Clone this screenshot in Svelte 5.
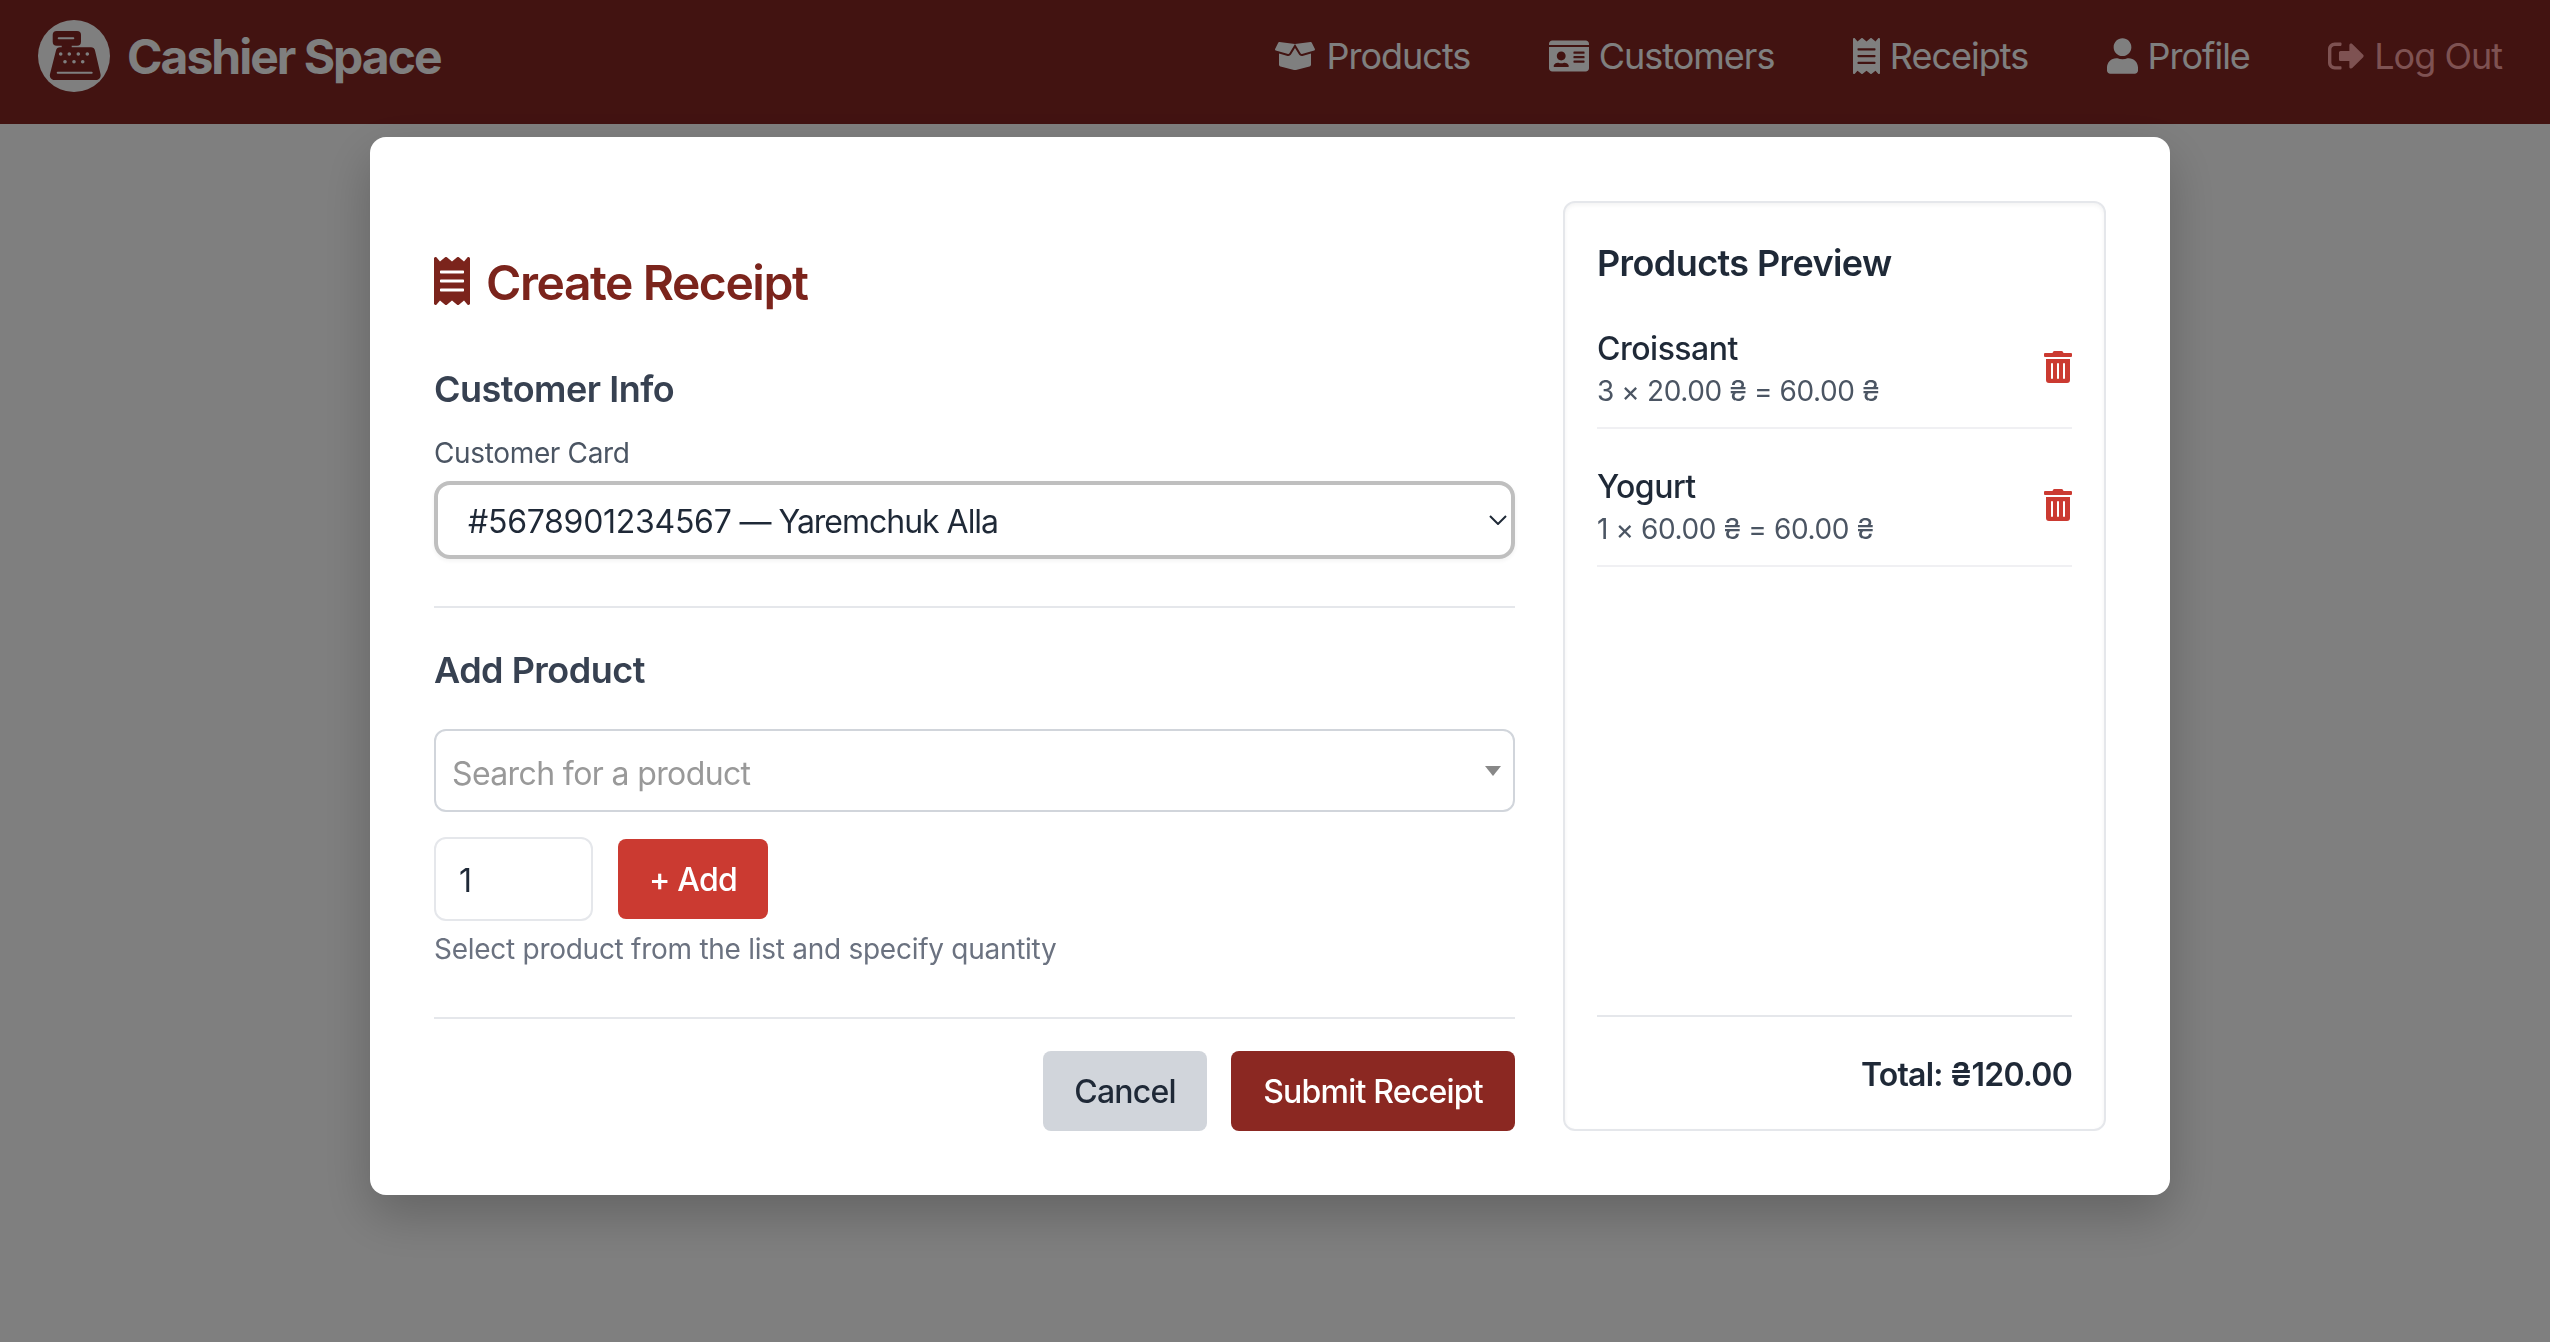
<script>
  const navItems = [
    { label: 'Products', cls: 'box', vb: '0 0 640 512', d: 'M425.7 256c-16.9 0-32.8-9-41.4-23.4L320 126l-64.2 106.6c-8.7 14.5-24.6 23.5-41.5 23.5-4.5 0-9-.6-13.3-1.9L64 215v178c0 14.7 10 27.5 24.2 31l216.2 54.1c10.2 2.5 20.9 2.5 31 0L551.8 424c14.2-3.6 24.2-16.4 24.2-31V215l-137 39.1c-4.3 1.3-8.8 1.9-13.3 1.9zm212.6-112.2L586.8 41c-3.1-6.2-9.8-9.8-16.7-8.9L320 64l91.7 152.1c3.8 6.3 11.4 9.3 18.5 7.3l197.9-56.5c9.9-2.9 14.7-13.9 10.2-23.1zM53.2 41L1.7 143.8c-4.6 9.2.3 20.2 10.1 23l197.9 56.5c7.1 2 14.7-1 18.5-7.3L320 64 69.8 32.1c-6.9-.8-13.5 2.7-16.6 8.9z' },
    { label: 'Customers', cls: 'card', vb: '0 0 576 512', d: 'M528 32H48C21.5 32 0 53.5 0 80v16h576V80c0-26.5-21.5-48-48-48zM0 432c0 26.5 21.5 48 48 48h480c26.5 0 48-21.5 48-48V128H0v304zm352-232c0-4.4 3.6-8 8-8h144c4.4 0 8 3.6 8 8v16c0 4.4-3.6 8-8 8H360c-4.4 0-8-3.6-8-8v-16zm0 64c0-4.4 3.6-8 8-8h144c4.4 0 8 3.6 8 8v16c0 4.4-3.6 8-8 8H360c-4.4 0-8-3.6-8-8v-16zm0 64c0-4.4 3.6-8 8-8h144c4.4 0 8 3.6 8 8v16c0 4.4-3.6 8-8 8H360c-4.4 0-8-3.6-8-8v-16zM176 192c35.3 0 64 28.7 64 64s-28.7 64-64 64-64-28.7-64-64 28.7-64 64-64zM67.1 396.2C75.5 370.5 99.6 352 128 352h8.2c12.3 5.1 25.7 8 39.8 8s27.6-2.9 39.8-8h8.2c28.4 0 52.5 18.5 60.9 44.2 3.2 9.9-5.2 19.8-15.6 19.8H82.7c-10.4 0-18.8-10-15.6-19.8z' },
    { label: 'Receipts', cls: 'rec', vb: '0 0 384 512', d: 'M358.4 3.2L320 48 265.6 3.2a15.9 15.9 0 0 0-19.2 0L192 48 137.6 3.2a15.9 15.9 0 0 0-19.2 0L64 48 25.6 3.2C15-4.7 0 2.8 0 16v480c0 13.2 15 20.7 25.6 12.8L64 464l54.4 44.8a15.9 15.9 0 0 0 19.2 0L192 464l54.4 44.8a15.9 15.9 0 0 0 19.2 0L320 464l38.4 44.8c10.5 7.9 25.6.4 25.6-12.8V16c0-13.2-15-20.7-25.6-12.8zM320 360c0 4.4-3.6 8-8 8H72c-4.4 0-8-3.6-8-8v-16c0-4.4 3.6-8 8-8h240c4.4 0 8 3.6 8 8v16zm0-96c0 4.4-3.6 8-8 8H72c-4.4 0-8-3.6-8-8v-16c0-4.4 3.6-8 8-8h240c4.4 0 8 3.6 8 8v16zm0-96c0 4.4-3.6 8-8 8H72c-4.4 0-8-3.6-8-8v-16c0-4.4 3.6-8 8-8h240c4.4 0 8 3.6 8 8v16z' },
    { label: 'Profile', cls: 'user', vb: '0 0 448 512', d: 'M224 256c70.7 0 128-57.3 128-128S294.7 0 224 0 96 57.3 96 128s57.3 128 128 128zm89.6 32h-16.7c-22.2 10.2-46.9 16-72.9 16s-50.6-5.8-72.9-16h-16.7C60.2 288 0 348.2 0 422.4V464c0 26.5 21.5 48 48 48h352c26.5 0 48-21.5 48-48v-41.6c0-74.2-60.2-134.4-134.4-134.4z' },
    { label: 'Log Out', cls: 'out', vb: '0 0 512 512', d: 'M500 273L345 428c-15 15-41 4.5-41-17v-83H180c-13.3 0-24-10.7-24-24v-96c0-13.3 10.7-24 24-24h124v-83c0-21.4 25.9-32 41-17l155 155c9.3 9.4 9.3 24.6 0 34zM192 436v-24c0-6.6-5.4-12-12-12H96c-26.5 0-48-21.5-48-48V160c0-26.5 21.5-48 48-48h84c6.6 0 12-5.4 12-12V76c0-6.6-5.4-12-12-12H96c-53 0-96 43-96 96v192c0 53 43 96 96 96h84c6.6 0 12-5.4 12-12z' }
  ];
  const receipt = navItems[2];
  const lines = [
    { name: 'Croissant', calc: '3 × 20.00 ₴ = 60.00 ₴' },
    { name: 'Yogurt', calc: '1 × 60.00 ₴ = 60.00 ₴' }
  ];
  const trash = 'M32 464a48 48 0 0 0 48 48h288a48 48 0 0 0 48-48V128H32zm272-256a16 16 0 0 1 32 0v224a16 16 0 0 1-32 0zm-96 0a16 16 0 0 1 32 0v224a16 16 0 0 1-32 0zm-96 0a16 16 0 0 1 32 0v224a16 16 0 0 1-32 0zM432 32H312l-9.4-18.7A24 24 0 0 0 281.1 0H166.8a23.72 23.72 0 0 0-21.4 13.3L136 32H16A16 16 0 0 0 0 48v32a16 16 0 0 0 16 16h416a16 16 0 0 0 16-16V48a16 16 0 0 0-16-16z';
</script>

<div class="page">
  <nav class="nav">
    <div class="brand">
      <svg class="logo" viewBox="0 0 72 72">
        <circle cx="36" cy="36" r="36" fill="#fff" />
        <g fill="#842623">
          <rect x="14.700" y="11" width="28.300" height="14.700" rx="4" />
          <rect x="23.700" y="24" width="10" height="5" />
          <path d="M22 27.300h31c2 0 3.500 1.200 4 3.200l5.500 23.500c.8 3.400-1.500 6-4.500 6H16.500c-3 0-5.300-2.600-4.500-6L18 30.500c.5-2 2-3.200 4-3.200z" />
        </g>
        <g fill="#fff">
          <rect x="19.700" y="17.200" width="16.600" height="2" rx="1" />
          <circle cx="22.700" cy="34" r="1.800" /><circle cx="31.300" cy="34" r="1.800" /><circle cx="40.300" cy="34" r="1.800" /><circle cx="49.300" cy="34" r="1.800" />
          <circle cx="27" cy="41.700" r="1.800" /><circle cx="36" cy="41.700" r="1.800" /><circle cx="44.700" cy="41.700" r="1.800" />
          <rect x="18.700" y="51.700" width="36" height="2" rx="1" />
        </g>
      </svg>
      <span class="brand-name">Cashier Space</span>
    </div>
    <div class="links">
      {#each navItems as item}
        <a class="link {item.cls}" href="#top">
          <svg viewBox={item.vb}><path fill="currentColor" d={item.d} /></svg>
          <span>{item.label}</span>
        </a>
      {/each}
    </div>
  </nav>

  <div class="overlay">
    <div class="modal">
      <section class="form">
        <h1 class="title">
          <svg viewBox={receipt.vb}><path fill="currentColor" d={receipt.d} /></svg>
          <span>Create Receipt</span>
        </h1>

        <h2 class="section first">Customer Info</h2>
        <div class="label">Customer Card</div>
        <div class="select">
          <span class="select-text"><span class="card-no">#5678901234567</span> — Yaremchuk Alla</span>
          <svg viewBox="0 0 18 10"><path d="M1 1l8 8 8-8" fill="none" stroke="#1f2937" stroke-width="2" /></svg>
        </div>

        <hr class="rule one" />

        <h2 class="section">Add Product</h2>
        <div class="search">
          <span>Search for a product</span>
          <i class="caret"></i>
        </div>
        <div class="qty-row">
          <div class="qty">1</div>
          <button class="btn add">+ Add</button>
        </div>
        <p class="hint">Select product from the list and specify quantity</p>

        <hr class="rule two" />

        <div class="actions">
          <button class="btn cancel">Cancel</button>
          <button class="btn submit">Submit Receipt</button>
        </div>
      </section>

      <aside class="preview">
        <h3 class="preview-title">Products Preview</h3>
        {#each lines as line}
          <div class="row">
            <div class="row-text">
              <div class="row-name">{line.name}</div>
              <div class="row-calc">{line.calc}</div>
            </div>
            <svg class="trash" viewBox="0 0 448 512"><path fill="currentColor" d={trash} /></svg>
          </div>
        {/each}
        <div class="total">Total: ₴120.00</div>
      </aside>
    </div>
  </div>
</div>

<style>
  :global(body) {
    margin: 0;
    background: #fff;
    font-family: Inter, "Liberation Sans", sans-serif;
  }
  :global(*), :global(*::before), :global(*::after) {
    box-sizing: border-box;
  }
  .page {
    min-height: 1342px;
  }
  .nav {
    height: 124px;
    background: #842623;
    color: #fff;
    display: flex;
    align-items: center;
    justify-content: space-between;
    padding: 0 48px 12px 38px;
  }
  .brand {
    display: flex;
    align-items: center;
    gap: 17px;
  }
  .logo {
    width: 72px;
    height: 72px;
    display: block;
  }
  .brand-name {
    padding-top: 2px;
    font-size: 48px;
    font-weight: 700;
    line-height: 64px;
    letter-spacing: -2px;
  }
  .links {
    display: flex;
    gap: 78.400px;
    align-items: center;
  }
  .link {
    display: flex;
    align-items: center;
    gap: 10px;
    color: #fff;
    text-decoration: none;
    font-size: 36px;
    line-height: 48px;
    letter-spacing: -1px;
  }
  .link svg {
    display: block;
    height: 32px;
    width: auto;
  }
  .link.box svg { width: 42px; }
  .link.card svg { height: 36px; width: 40px; }
  .link.rec svg { height: 36px; width: 27px; }
  .link.user svg { height: 36px; width: 31px; }
  .link.out { color: #fca5a5; }
  .link.out svg { height: 36px; width: 36px; }

  .overlay {
    position: fixed;
    inset: 0;
    background: rgba(0, 0, 0, 0.5);
    display: flex;
    justify-content: center;
    align-items: flex-start;
    padding: 137px 10px 0 0;
  }
  .modal {
    width: 1800px;
    background: #fff;
    border-radius: 16px;
    padding: 64px;
    display: grid;
    grid-template-columns: 1081px 543px;
    column-gap: 48px;
    box-shadow: 0 20px 50px rgba(0, 0, 0, 0.22);
  }
  .form {
    display: flex;
    flex-direction: column;
    min-width: 0;
  }
  .title {
    margin: 48px 0 0;
    height: 64px;
    display: flex;
    align-items: center;
    gap: 16px;
    font-size: 48px;
    line-height: 64px;
    font-weight: 600;
    color: #7b241c;
    letter-spacing: -1.44px;
  }
  .title span {
    margin-top: 3px;
  }
  .title svg {
    width: 36px;
    height: 48px;
    display: block;
  }
  .section {
    margin: 0;
    font-size: 36px;
    line-height: 48px;
    font-weight: 600;
    color: #374151;
    letter-spacing: -0.5px;
  }
  .section.first { margin-top: 52px; }
  .label {
    margin-top: 20px;
    font-size: 28px;
    line-height: 40px;
    color: #4b5563;
    letter-spacing: -0.35px;
  }
  .select {
    margin-top: 8px;
    height: 78px;
    border: 4px solid #bfbfbf;
    border-radius: 16px;
    padding: 2px 4px 0 30px;
    display: flex;
    align-items: center;
    justify-content: space-between;
    font-size: 32px;
    color: #1f2937;
    box-shadow: 0 2px 4px rgba(0, 0, 0, 0.05);
  }
  .select-text {
    letter-spacing: -1.02px;
  }
  .card-no {
    letter-spacing: -0.28px;
  }
  .select svg {
    width: 18px;
    height: 10px;
    display: block;
    margin-top: -2px;
  }
  .rule {
    width: 100%;
    height: 2px;
    border: 0;
    background: #e5e7eb;
    margin: 0;
  }
  .rule.one { margin: 47px 0 38px; }
  .rule.two { margin: 48px 0 32px; }
  .search {
    margin-top: 35px;
    height: 83px;
    border: 2px solid #d1d5db;
    border-radius: 12px;
    padding: 6px 12px 0 16px;
    display: flex;
    align-items: center;
    justify-content: space-between;
    font-size: 32px;
    color: #999;
    letter-spacing: -0.62px;
  }
  .caret {
    width: 0;
    height: 0;
    border-left: 8px solid transparent;
    border-right: 8px solid transparent;
    border-top: 10px solid #888;
    margin-bottom: 6px;
  }
  .qty-row {
    margin-top: 25px;
    display: flex;
    align-items: center;
    gap: 25px;
  }
  .qty {
    width: 159px;
    height: 84px;
    border: 2px solid #e5e7eb;
    border-radius: 12px;
    padding: 2px 0 0 23px;
    display: flex;
    align-items: center;
    font-size: 32px;
    color: #1f2937;
  }
  .btn {
    height: 80px;
    border: 0;
    border-radius: 8px;
    font-family: inherit;
    font-size: 32px;
    font-weight: 500;
    padding: 0;
    letter-spacing: -0.8px;
  }
  .add {
    width: 150px;
    padding-top: 1px;
    background: #cb3a31;
    color: #fff;
  }
  .hint {
    margin: 8px 0 0;
    font-size: 28px;
    line-height: 40px;
    color: #6b7280;
    letter-spacing: -0.27px;
  }
  .actions {
    display: flex;
    justify-content: flex-end;
    gap: 24px;
  }
  .cancel {
    width: 164px;
    background: #d1d5db;
    color: #1f2937;
  }
  .submit {
    width: 284px;
    background: #8b2822;
    color: #fff;
  }
  .preview {
    border: 2px solid #e5e7eb;
    border-radius: 12px;
    padding: 36px 32px 32px;
    display: flex;
    flex-direction: column;
    box-shadow: inset 0 2px 4px rgba(0, 0, 0, 0.05);
  }
  .preview-title {
    margin: 0 0 4px;
    font-size: 36px;
    line-height: 48px;
    font-weight: 600;
    color: #1f2937;
    letter-spacing: -0.6px;
  }
  .row {
    display: flex;
    align-items: center;
    justify-content: space-between;
    padding: 34px 0 16px;
    border-bottom: 2px solid #f0f0f3;
  }
  .row-name {
    margin-top: 2px;
    font-size: 32px;
    line-height: 44px;
    font-weight: 500;
    color: #1f2937;
    letter-spacing: -0.5px;
  }
  .row-calc {
    font-size: 28px;
    line-height: 40px;
    color: #4b5563;
    letter-spacing: -0.4px;
  }
  .trash {
    width: 28px;
    height: 32px;
    color: #cb3a31;
    display: block;
    margin-bottom: 3px;
  }
  .total {
    margin-top: auto;
    border-top: 2px solid #e5e7eb;
    padding-top: 36px;
    text-align: right;
    font-size: 32px;
    line-height: 44px;
    font-weight: 600;
    color: #1f2937;
    letter-spacing: -0.8px;
  }
</style>
